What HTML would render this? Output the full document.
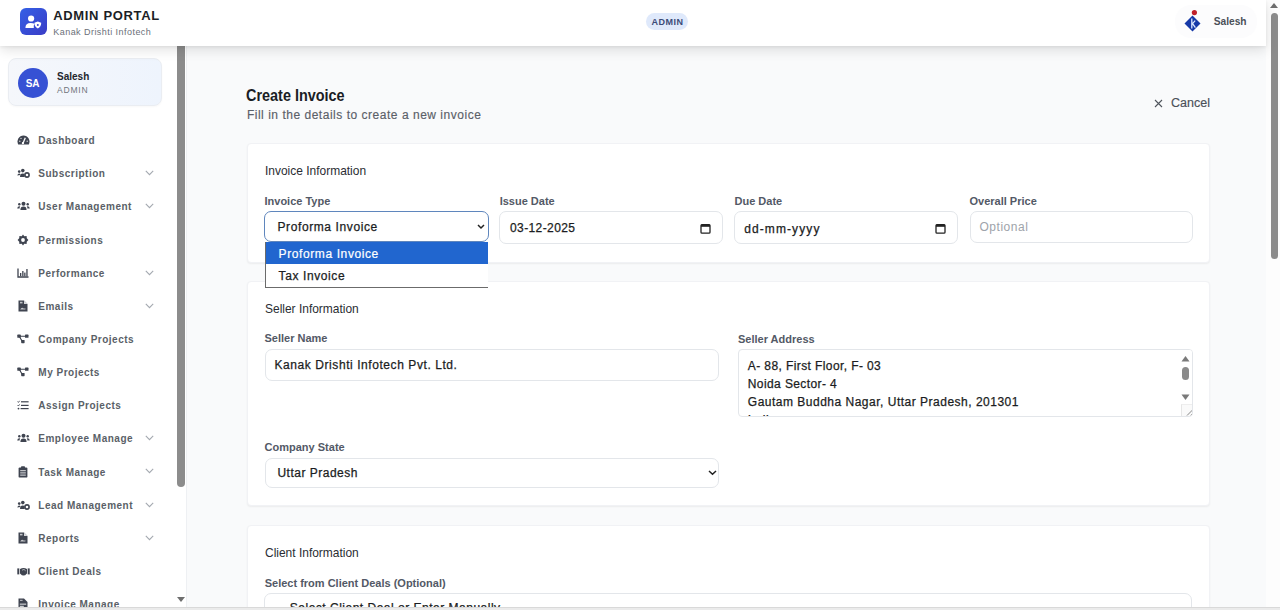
<!DOCTYPE html>
<html><head><meta charset="utf-8">
<style>
*{margin:0;padding:0;box-sizing:border-box}
html,body{width:1280px;height:610px;overflow:hidden;background:#f9fafb;font-family:"Liberation Sans",sans-serif}
.a{position:absolute;white-space:nowrap;line-height:1}
#hdr{position:absolute;left:0;top:0;width:1266px;height:46px;background:#fff;z-index:5;box-shadow:0 4px 12px rgba(0,0,0,0.12),0 1px 3px rgba(0,0,0,0.06)}
#side{position:absolute;left:0;top:46px;width:187px;height:561px;background:#fff;border-right:1px solid #eef0f3}
#main{position:absolute;left:188px;top:46px;width:1078px;height:561px;background:#f9fafb}
.card{position:absolute;background:#fff;border:1px solid #f1f2f5;border-radius:4px;box-shadow:0 1px 2px rgba(0,0,0,0.06)}
.lbl{font-size:11px;font-weight:bold;color:#535966}
.inp{position:absolute;background:#fff;border:1px solid #e3e6ea;border-radius:7px}
.val{font-size:12px;color:#1b1d22;-webkit-text-stroke:0.25px #1b1d22}
.sec{font-size:12.6px;color:#2a2d33;transform-origin:0 0;transform:scaleX(0.95)}
.menu{font-size:10px;font-weight:bold;color:#5a5f67;letter-spacing:0.5px}
.ico{position:absolute}
.ico svg{display:block}
</style></head><body>
<div id="main"></div>
<div id="side"></div>

<!-- sidebar -->
<div style="position:absolute;left:8px;top:58px;width:154px;height:48px;border-radius:8px;background:linear-gradient(90deg,#f5f7fb,#eef4fd);border:1px solid #eaedf2;box-shadow:0 1px 2px rgba(0,0,0,0.03)"></div>
<div style="position:absolute;left:17.6px;top:68px;width:30px;height:30px;border-radius:50%;background:#3651d4"></div>
<div class="a" style="left:17.6px;top:78.5px;width:30px;text-align:center;font-size:10px;font-weight:bold;color:#fff">SA</div>
<div class="a" style="left:57px;top:71.7px;font-size:10px;font-weight:bold;color:#23262d">Salesh</div>
<div class="a" style="left:57px;top:85.7px;font-size:8.5px;color:#70757d;letter-spacing:0.8px">ADMIN</div>
<div class="a menu" style="left:38.3px;top:136.13px">Dashboard</div>
<div class="ico" style="left:16.5px;top:135.1px;width:13.0px;height:10.0px"><svg width="13" height="10" viewBox="0 0 13 10"><path d="M1.2 9.4 A6 6 0 1 1 11.8 9.4 Z" fill="#3f4450"/><path d="M5.9 8.6 L8.3 2.8" stroke="#fff" stroke-width="1.3"/><circle cx="5.9" cy="8.2" r="1.1" fill="#fff"/><circle cx="2.8" cy="6.2" r="0.7" fill="#fff" opacity="0.8"/><circle cx="4" cy="3.4" r="0.7" fill="#fff" opacity="0.8"/><circle cx="10.2" cy="6.2" r="0.7" fill="#fff" opacity="0.8"/></svg></div>
<div class="a menu" style="left:38.3px;top:169.28px">Subscription</div>
<div class="ico" style="left:16.5px;top:168.2px;width:13.0px;height:10.0px"><svg width="13" height="10" viewBox="0 0 13 10"><circle cx="2.2" cy="3.6" r="1.3" fill="#3f4450"/><circle cx="5.8" cy="2.6" r="1.8" fill="#3f4450"/><path d="M0.3 7.5 Q0.6 5.6 2.4 5.6 Q3.6 5.8 3.4 7 Z" fill="#3f4450"/><path d="M3 9 Q3 5.6 5.8 5.6 Q7.2 5.6 7.6 6.6 L7.6 9 Z" fill="#3f4450"/><circle cx="10" cy="7" r="2.1" fill="none" stroke="#3f4450" stroke-width="1.6"/></svg></div>
<div class="ico" style="left:145px;top:170.1px;width:9px;height:6px"><svg width="9" height="6" viewBox="0 0 9 6"><path d="M0.8 0.8 L4.5 4.6 L8.2 0.8" fill="none" stroke="#a4a9b0" stroke-width="1.1"/></svg></div>
<div class="a menu" style="left:38.3px;top:202.43px">User Management</div>
<div class="ico" style="left:16.5px;top:201.4px;width:13.0px;height:10.0px"><svg width="13" height="10" viewBox="0 0 13 10"><circle cx="6.5" cy="2.8" r="2" fill="#3f4450"/><circle cx="2.3" cy="3.2" r="1.2" fill="#3f4450"/><circle cx="10.7" cy="3.2" r="1.2" fill="#3f4450"/><path d="M3.4 9 Q3.4 5.6 6.5 5.6 Q9.6 5.6 9.6 9 Z" fill="#3f4450"/><path d="M0.2 7.4 Q0.4 5.3 2.5 5.3 L3.2 5.5 Q2.6 6.3 2.6 7.4 Z" fill="#3f4450"/><path d="M12.8 7.4 Q12.6 5.3 10.5 5.3 L9.8 5.5 Q10.4 6.3 10.4 7.4 Z" fill="#3f4450"/></svg></div>
<div class="ico" style="left:145px;top:203.2px;width:9px;height:6px"><svg width="9" height="6" viewBox="0 0 9 6"><path d="M0.8 0.8 L4.5 4.6 L8.2 0.8" fill="none" stroke="#a4a9b0" stroke-width="1.1"/></svg></div>
<div class="a menu" style="left:38.3px;top:235.58px">Permissions</div>
<div class="ico" style="left:17.0px;top:233.5px;width:12.0px;height:12.0px"><svg width="12" height="12" viewBox="0 0 12 12"><path d="M6 0.6 L7.3 2.3 L9.6 2.1 L9.8 4.3 L11.4 6 L9.8 7.7 L9.6 9.9 L7.3 9.7 L6 11.4 L4.7 9.7 L2.4 9.9 L2.2 7.7 L0.6 6 L2.2 4.3 L2.4 2.1 L4.7 2.3 Z" fill="#3f4450"/><circle cx="6" cy="6" r="1.9" fill="#fff"/></svg></div>
<div class="a menu" style="left:38.3px;top:268.74px">Performance</div>
<div class="ico" style="left:17.0px;top:267.7px;width:12.0px;height:10.0px"><svg width="12" height="10" viewBox="0 0 12 10"><path d="M1 0.5 V9 H11.5" fill="none" stroke="#3f4450" stroke-width="1.3"/><rect x="3" y="5" width="1.3" height="3.2" fill="#3f4450"/><rect x="5.2" y="3" width="1.3" height="5.2" fill="#3f4450"/><rect x="7.2" y="4.6" width="1.3" height="3.6" fill="#3f4450"/><rect x="9.3" y="1" width="1.3" height="7.2" fill="#3f4450"/></svg></div>
<div class="ico" style="left:145px;top:269.5px;width:9px;height:6px"><svg width="9" height="6" viewBox="0 0 9 6"><path d="M0.8 0.8 L4.5 4.6 L8.2 0.8" fill="none" stroke="#a4a9b0" stroke-width="1.1"/></svg></div>
<div class="a menu" style="left:38.3px;top:301.88px">Emails</div>
<div class="ico" style="left:18.0px;top:299.8px;width:10.0px;height:12.0px"><svg width="10" height="12" viewBox="0 0 10 12"><path d="M0.5 0.5 H6 L9.5 4 V11.5 H0.5 Z" fill="#3f4450"/><path d="M6 0.5 V4 H9.5" fill="#fff" opacity="0.8"/><rect x="2" y="1.8" width="2.5" height="1.6" fill="#fff" opacity="0.7"/><path d="M2.2 9.5 Q3.5 6.8 5 8 Q6 9 7.4 8.3 V9.5 Z" fill="#fff" opacity="0.7"/></svg></div>
<div class="ico" style="left:145px;top:302.6px;width:9px;height:6px"><svg width="9" height="6" viewBox="0 0 9 6"><path d="M0.8 0.8 L4.5 4.6 L8.2 0.8" fill="none" stroke="#a4a9b0" stroke-width="1.1"/></svg></div>
<div class="a menu" style="left:38.3px;top:335.03px">Company Projects</div>
<div class="ico" style="left:17.0px;top:334.0px;width:12.0px;height:10.0px"><svg width="12" height="10" viewBox="0 0 12 10"><path d="M2.2 2.2 H9.4 M2.2 2.2 L5.4 7.6" stroke="#3f4450" stroke-width="1.1"/><rect x="0.3" y="0.6" width="3.5" height="3.2" rx="0.6" fill="#3f4450"/><rect x="8" y="0.6" width="3.5" height="3.2" rx="0.6" fill="#3f4450"/><rect x="4.2" y="6" width="3.4" height="3.2" rx="0.6" fill="#3f4450"/></svg></div>
<div class="a menu" style="left:38.3px;top:368.19px">My Projects</div>
<div class="ico" style="left:17.0px;top:367.1px;width:12.0px;height:10.0px"><svg width="12" height="10" viewBox="0 0 12 10"><path d="M2.2 2.2 H9.4 M2.2 2.2 L5.4 7.6" stroke="#3f4450" stroke-width="1.1"/><rect x="0.3" y="0.6" width="3.5" height="3.2" rx="0.6" fill="#3f4450"/><rect x="8" y="0.6" width="3.5" height="3.2" rx="0.6" fill="#3f4450"/><rect x="4.2" y="6" width="3.4" height="3.2" rx="0.6" fill="#3f4450"/></svg></div>
<div class="a menu" style="left:38.3px;top:401.34px">Assign Projects</div>
<div class="ico" style="left:17.0px;top:400.3px;width:12.0px;height:10.0px"><svg width="12" height="10" viewBox="0 0 12 10"><path d="M0.6 1.6 L1.4 2.4 L2.6 0.8 M0.6 5.2 L1.4 6 L2.6 4.4" stroke="#3f4450" stroke-width="0.9" fill="none"/><circle cx="1.5" cy="8.6" r="0.9" fill="#3f4450"/><rect x="4" y="1.2" width="7.6" height="1.2" fill="#3f4450"/><rect x="4" y="4.8" width="7.6" height="1.2" fill="#3f4450"/><rect x="3.6" y="8" width="8" height="1.2" fill="#3f4450"/></svg></div>
<div class="a menu" style="left:38.3px;top:434.49px">Employee Manage</div>
<div class="ico" style="left:16.5px;top:433.4px;width:13.0px;height:10.0px"><svg width="13" height="10" viewBox="0 0 13 10"><circle cx="6.5" cy="2.8" r="2" fill="#3f4450"/><circle cx="2.3" cy="3.2" r="1.2" fill="#3f4450"/><circle cx="10.7" cy="3.2" r="1.2" fill="#3f4450"/><path d="M3.4 9 Q3.4 5.6 6.5 5.6 Q9.6 5.6 9.6 9 Z" fill="#3f4450"/><path d="M0.2 7.4 Q0.4 5.3 2.5 5.3 L3.2 5.5 Q2.6 6.3 2.6 7.4 Z" fill="#3f4450"/><path d="M12.8 7.4 Q12.6 5.3 10.5 5.3 L9.8 5.5 Q10.4 6.3 10.4 7.4 Z" fill="#3f4450"/></svg></div>
<div class="ico" style="left:145px;top:435.2px;width:9px;height:6px"><svg width="9" height="6" viewBox="0 0 9 6"><path d="M0.8 0.8 L4.5 4.6 L8.2 0.8" fill="none" stroke="#a4a9b0" stroke-width="1.1"/></svg></div>
<div class="a menu" style="left:38.3px;top:467.63px">Task Manage</div>
<div class="ico" style="left:18.0px;top:465.6px;width:10.0px;height:12.0px"><svg width="10" height="12" viewBox="0 0 10 12"><rect x="0.6" y="1.4" width="8.8" height="10.2" rx="1.2" fill="#3f4450"/><rect x="3" y="0.3" width="4" height="2.2" rx="0.8" fill="#3f4450"/><rect x="2.2" y="4.2" width="5.6" height="1" fill="#fff" opacity="0.85"/><rect x="2.2" y="6.4" width="5.6" height="1" fill="#fff" opacity="0.85"/><rect x="2.2" y="8.6" width="5.6" height="1" fill="#fff" opacity="0.85"/></svg></div>
<div class="ico" style="left:145px;top:468.4px;width:9px;height:6px"><svg width="9" height="6" viewBox="0 0 9 6"><path d="M0.8 0.8 L4.5 4.6 L8.2 0.8" fill="none" stroke="#a4a9b0" stroke-width="1.1"/></svg></div>
<div class="a menu" style="left:38.3px;top:500.78px">Lead Management</div>
<div class="ico" style="left:16.5px;top:499.7px;width:13.0px;height:10.0px"><svg width="13" height="10" viewBox="0 0 13 10"><circle cx="2.2" cy="3.6" r="1.3" fill="#3f4450"/><circle cx="5.8" cy="2.6" r="1.8" fill="#3f4450"/><path d="M0.3 7.5 Q0.6 5.6 2.4 5.6 Q3.6 5.8 3.4 7 Z" fill="#3f4450"/><path d="M3 9 Q3 5.6 5.8 5.6 Q7.2 5.6 7.6 6.6 L7.6 9 Z" fill="#3f4450"/><circle cx="10" cy="7" r="2.1" fill="none" stroke="#3f4450" stroke-width="1.6"/></svg></div>
<div class="ico" style="left:145px;top:501.5px;width:9px;height:6px"><svg width="9" height="6" viewBox="0 0 9 6"><path d="M0.8 0.8 L4.5 4.6 L8.2 0.8" fill="none" stroke="#a4a9b0" stroke-width="1.1"/></svg></div>
<div class="a menu" style="left:38.3px;top:533.93px">Reports</div>
<div class="ico" style="left:18.0px;top:531.9px;width:10.0px;height:12.0px"><svg width="10" height="12" viewBox="0 0 10 12"><path d="M0.5 0.5 H6 L9.5 4 V11.5 H0.5 Z" fill="#3f4450"/><path d="M6 0.5 V4 H9.5" fill="#fff" opacity="0.8"/><rect x="2" y="1.8" width="2.5" height="1.6" fill="#fff" opacity="0.7"/><path d="M2.2 9.5 Q3.5 6.8 5 8 Q6 9 7.4 8.3 V9.5 Z" fill="#fff" opacity="0.7"/></svg></div>
<div class="ico" style="left:145px;top:534.7px;width:9px;height:6px"><svg width="9" height="6" viewBox="0 0 9 6"><path d="M0.8 0.8 L4.5 4.6 L8.2 0.8" fill="none" stroke="#a4a9b0" stroke-width="1.1"/></svg></div>
<div class="a menu" style="left:38.3px;top:567.09px">Client Deals</div>
<div class="ico" style="left:16.5px;top:566.6px;width:13.0px;height:9.0px"><svg width="13" height="9" viewBox="0 0 13 9"><rect x="0.3" y="1.4" width="2" height="6" fill="#3f4450"/><rect x="10.7" y="1.4" width="2" height="6" fill="#3f4450"/><path d="M3 2 Q6.5 0 10 2 V6.4 Q8 8.6 6.5 8.6 Q5 8.6 3 6.4 Z" fill="#3f4450"/><path d="M5 3.2 L7 2.4 L8.6 3.8" stroke="#fff" stroke-width="0.8" fill="none" opacity="0.7"/></svg></div>
<div class="a menu" style="left:38.3px;top:600.24px">Invoice Manage</div>
<div class="ico" style="left:18.0px;top:598.2px;width:10.0px;height:12.0px"><svg width="10" height="12" viewBox="0 0 10 12"><path d="M0.5 0.5 H6 L9.5 4 V11.5 H0.5 Z" fill="#3f4450"/><rect x="1.8" y="5.6" width="6.4" height="1.1" fill="#fff" opacity="0.8"/><rect x="1.8" y="7.8" width="4" height="1.1" fill="#fff" opacity="0.8"/><rect x="2" y="1.8" width="2.6" height="1" fill="#fff" opacity="0.7"/></svg></div>

<!-- sidebar scrollbar -->
<div style="position:absolute;left:177px;top:46px;width:8px;height:441px;background:#8c8c8c;border-radius:0 0 4px 4px"></div>
<svg style="position:absolute;left:176px;top:596px" width="10" height="8"><path d="M1 1 H9 L5 6 Z" fill="#6e6e6e"/></svg>

<!-- header -->
<div id="hdr">
  <div style="position:absolute;left:20px;top:8px;width:27px;height:27px;border-radius:6px;background:linear-gradient(135deg,#3460e6,#3a3cc6)"></div>
  <svg style="position:absolute;left:20px;top:8px" width="27" height="27" viewBox="0 0 27 27">
    <circle cx="11.1" cy="10.5" r="3.1" fill="#fff"/>
    <path d="M5.4 20 Q5.4 15 10.6 15 Q13.2 15 14.6 15.8 Q13.4 17.4 13.8 20 Z" fill="#fff"/>
    <path d="M17.8 13.6 L21.2 14.8 Q21.2 19 17.8 20.4 Q14.4 19 14.4 14.8 Z" fill="#fff"/>
    <circle cx="17.8" cy="16.9" r="1" fill="#3a45cc"/>
  </svg>
  <div class="a" style="left:53.3px;top:9px;font-size:13px;font-weight:bold;color:#1c1f26;letter-spacing:0.65px">ADMIN PORTAL</div>
  <div class="a" style="left:53.3px;top:28.2px;font-size:9px;color:#6b7079;letter-spacing:0.45px">Kanak Drishti Infotech</div>
  <div style="position:absolute;left:646px;top:13px;width:42px;height:17px;border-radius:9px;background:#dfe9fb"></div>
  <div class="a" style="left:651.4px;top:18px;font-size:9px;font-weight:bold;color:#3b4b78;letter-spacing:0.5px">ADMIN</div>
  <div style="position:absolute;left:1175px;top:5px;width:82px;height:33px;border-radius:16px;background:#fcfcfd"></div>
  <svg style="position:absolute;left:1183px;top:9px" width="20" height="24" viewBox="0 0 20 24">
    <path d="M9.5 6.5 L17.5 14.5 L9.5 22.5 L1.5 14.5 Z" fill="#1639a8"/>
    <circle cx="11.4" cy="3.6" r="2.6" fill="#c0202a"/>
    <path d="M8.8 9.5 V19.5 M8.8 15.4 L12.2 11.6 M9.6 14.6 L12.4 18.6" stroke="#dce8ff" stroke-width="1.3" fill="none"/>
  </svg>
  <div class="a" style="left:1213.7px;top:17.2px;font-size:10.2px;font-weight:bold;color:#4b5058">Salesh</div>
</div>

<!-- page scrollbar -->
<div style="position:absolute;left:1266px;top:0;width:14px;height:607px;background:#fdfdfd"></div>
<svg style="position:absolute;left:1269px;top:1px" width="10" height="8"><path d="M1 7 H9 L5 2 Z" fill="#6e6e6e"/></svg>
<div style="position:absolute;left:1271px;top:13px;width:7px;height:246px;background:#8c8c8c;border-radius:4px"></div>

<!-- title -->
<div class="a" style="left:246px;top:86.6px;font-size:17.3px;font-weight:bold;color:#1a1d24;transform-origin:0 0;transform:scaleX(0.835)">Create Invoice</div>
<div class="a" style="left:246.9px;top:108.8px;font-size:12px;color:#5b6068;letter-spacing:0.52px;-webkit-text-stroke:0.15px #5b6068">Fill in the details to create a new invoice</div>
<svg style="position:absolute;left:1154px;top:99px" width="9" height="9" viewBox="0 0 9 9"><path d="M1 1 L8 8 M8 1 L1 8" stroke="#50555d" stroke-width="1.1"/></svg>
<div class="a" style="left:1171px;top:96.9px;font-size:12.5px;color:#4b5058;-webkit-text-stroke:0.15px #4b5058">Cancel</div>

<!-- card 1 -->
<div class="card" style="left:247px;top:143px;width:963px;height:120px"></div>
<div class="a sec" style="left:265px;top:164.7px">Invoice Information</div>
<div class="a lbl" style="left:264.5px;top:195.7px">Invoice Type</div>
<div class="a lbl" style="left:499.7px;top:195.7px">Issue Date</div>
<div class="a lbl" style="left:734.5px;top:195.7px">Due Date</div>
<div class="a lbl" style="left:969.5px;top:195.7px">Overall Price</div>
<div class="inp" style="left:264px;top:210.5px;width:224.5px;height:31.5px;border:1.5px solid #5f86bd;border-radius:7px"></div>
<div class="a val" style="left:277.5px;top:220.8px;letter-spacing:0.6px">Proforma Invoice</div>
<svg style="position:absolute;left:477px;top:224px" width="8" height="6" viewBox="0 0 8 6"><path d="M1 1 L4 4 L7 1" fill="none" stroke="#222" stroke-width="1.5"/></svg>
<div class="inp" style="left:499px;top:211px;width:224px;height:33px"></div>
<div class="a val" style="left:510px;top:222.2px;letter-spacing:0.4px">03-12-2025</div>
<svg style="position:absolute;left:700px;top:222.5px" width="11" height="11" viewBox="0 0 11 11"><rect x="1" y="1.6" width="9" height="8.6" rx="1" fill="none" stroke="#222" stroke-width="1.3"/><rect x="1" y="1.6" width="9" height="2.2" fill="#222"/></svg>
<div class="inp" style="left:734px;top:211px;width:224px;height:33px"></div>
<div class="a val" style="left:744.2px;top:222.8px;letter-spacing:1.1px">dd-mm-yyyy</div>
<svg style="position:absolute;left:935px;top:222.5px" width="11" height="11" viewBox="0 0 11 11"><rect x="1" y="1.6" width="9" height="8.6" rx="1" fill="none" stroke="#222" stroke-width="1.3"/><rect x="1" y="1.6" width="9" height="2.2" fill="#222"/></svg>
<div class="inp" style="left:969.5px;top:211px;width:223.5px;height:31.5px"></div>
<div class="a val" style="left:979.4px;top:221.2px;color:#9ea3aa;letter-spacing:0.55px;-webkit-text-stroke:0">Optional</div>

<!-- card 2 -->
<div class="card" style="left:247px;top:281px;width:963px;height:225px"></div>
<div class="a sec" style="left:264.5px;top:303px">Seller Information</div>
<div class="a lbl" style="left:264.5px;top:333.2px">Seller Name</div>
<div class="a lbl" style="left:738px;top:333.7px">Seller Address</div>
<div class="inp" style="left:264.5px;top:349.3px;width:454px;height:31.5px"></div>
<div class="a val" style="left:274.5px;top:359.3px;letter-spacing:0.57px">Kanak Drishti Infotech Pvt. Ltd.</div>
<div class="inp" style="left:737.5px;top:349.3px;width:455px;height:67.5px;border-radius:4px;overflow:hidden">
  <div class="a val" style="left:9.3px;top:9.8px;letter-spacing:0.4px">A- 88, First Floor, F- 03</div>
  <div class="a val" style="left:9.3px;top:27.7px;letter-spacing:0.4px">Noida Sector- 4</div>
  <div class="a val" style="left:9.3px;top:45.6px;letter-spacing:0.5px">Gautam Buddha Nagar, Uttar Pradesh, 201301</div>
  <div class="a val" style="left:9.3px;top:63.6px;letter-spacing:0.5px">India</div>
  <div style="position:absolute;right:0;top:0;width:13px;height:67px;background:#fff"></div>
  <svg style="position:absolute;left:442.5px;top:4.5px" width="9" height="7"><path d="M0.5 6.5 H8.5 L4.5 1 Z" fill="#7a7a7a"/></svg>
  <div style="position:absolute;left:443.3px;top:16.3px;width:7.2px;height:13.3px;border-radius:3.6px;background:#8a8a8a"></div>
  <svg style="position:absolute;left:442.5px;top:44px" width="9" height="7"><path d="M0.5 0.5 H8.5 L4.5 6 Z" fill="#7a7a7a"/></svg>
  <div style="position:absolute;left:442px;top:54px;width:13px;height:13px;border-left:1px solid #e6e6e6;border-top:1px solid #eeeeee;background:#fafafa"></div>
  <svg style="position:absolute;left:443px;top:55px" width="12" height="12"><path d="M5 10.5 L10.5 5 M8.5 10.5 L10.5 8.5" stroke="#7a7a7a" stroke-width="0.9"/></svg>
</div>
<div class="a lbl" style="left:264.6px;top:441.8px">Company State</div>
<div class="inp" style="left:264.5px;top:457.7px;width:454px;height:30px"></div>
<div class="a val" style="left:277.4px;top:466.7px;letter-spacing:0.5px">Uttar Pradesh</div>
<svg style="position:absolute;left:707.5px;top:469.5px" width="9" height="6" viewBox="0 0 9 6"><path d="M1 1 L4.5 4.3 L8 1" fill="none" stroke="#222" stroke-width="1.5"/></svg>

<!-- card 3 -->
<div class="card" style="left:247px;top:525px;width:963px;height:120px"></div>
<div class="a sec" style="left:264.7px;top:546.8px">Client Information</div>
<div class="a lbl" style="left:264.7px;top:577.7px">Select from Client Deals (Optional)</div>
<div class="inp" style="left:264.3px;top:593.4px;width:928px;height:40px"></div>
<div class="a val" style="left:277px;top:602px;letter-spacing:0.5px">-- Select Client Deal or Enter Manually --</div>

<!-- dropdown -->
<div style="position:absolute;left:265px;top:242.4px;width:223px;height:46px;background:#fff;border-left:1px solid #6b6b6b;border-bottom:1px solid #6b6b6b;z-index:6">
  <div style="position:absolute;left:0;top:0;width:222px;height:21.5px;background:#2166cf"></div>
  <div class="a" style="left:12.6px;top:5.6px;font-size:12px;color:#fff;letter-spacing:0.6px;-webkit-text-stroke:0.2px #fff">Proforma Invoice</div>
  <div class="a" style="left:12.6px;top:27.2px;font-size:12px;color:#1b1d22;letter-spacing:0.6px;-webkit-text-stroke:0.25px #1b1d22">Tax Invoice</div>
</div>

<!-- bottom bar -->
<div style="position:absolute;left:0;top:607px;width:1280px;height:3px;background:#ebebeb;border-top:1px solid #d9d9d9;z-index:9"></div>
</body></html>
